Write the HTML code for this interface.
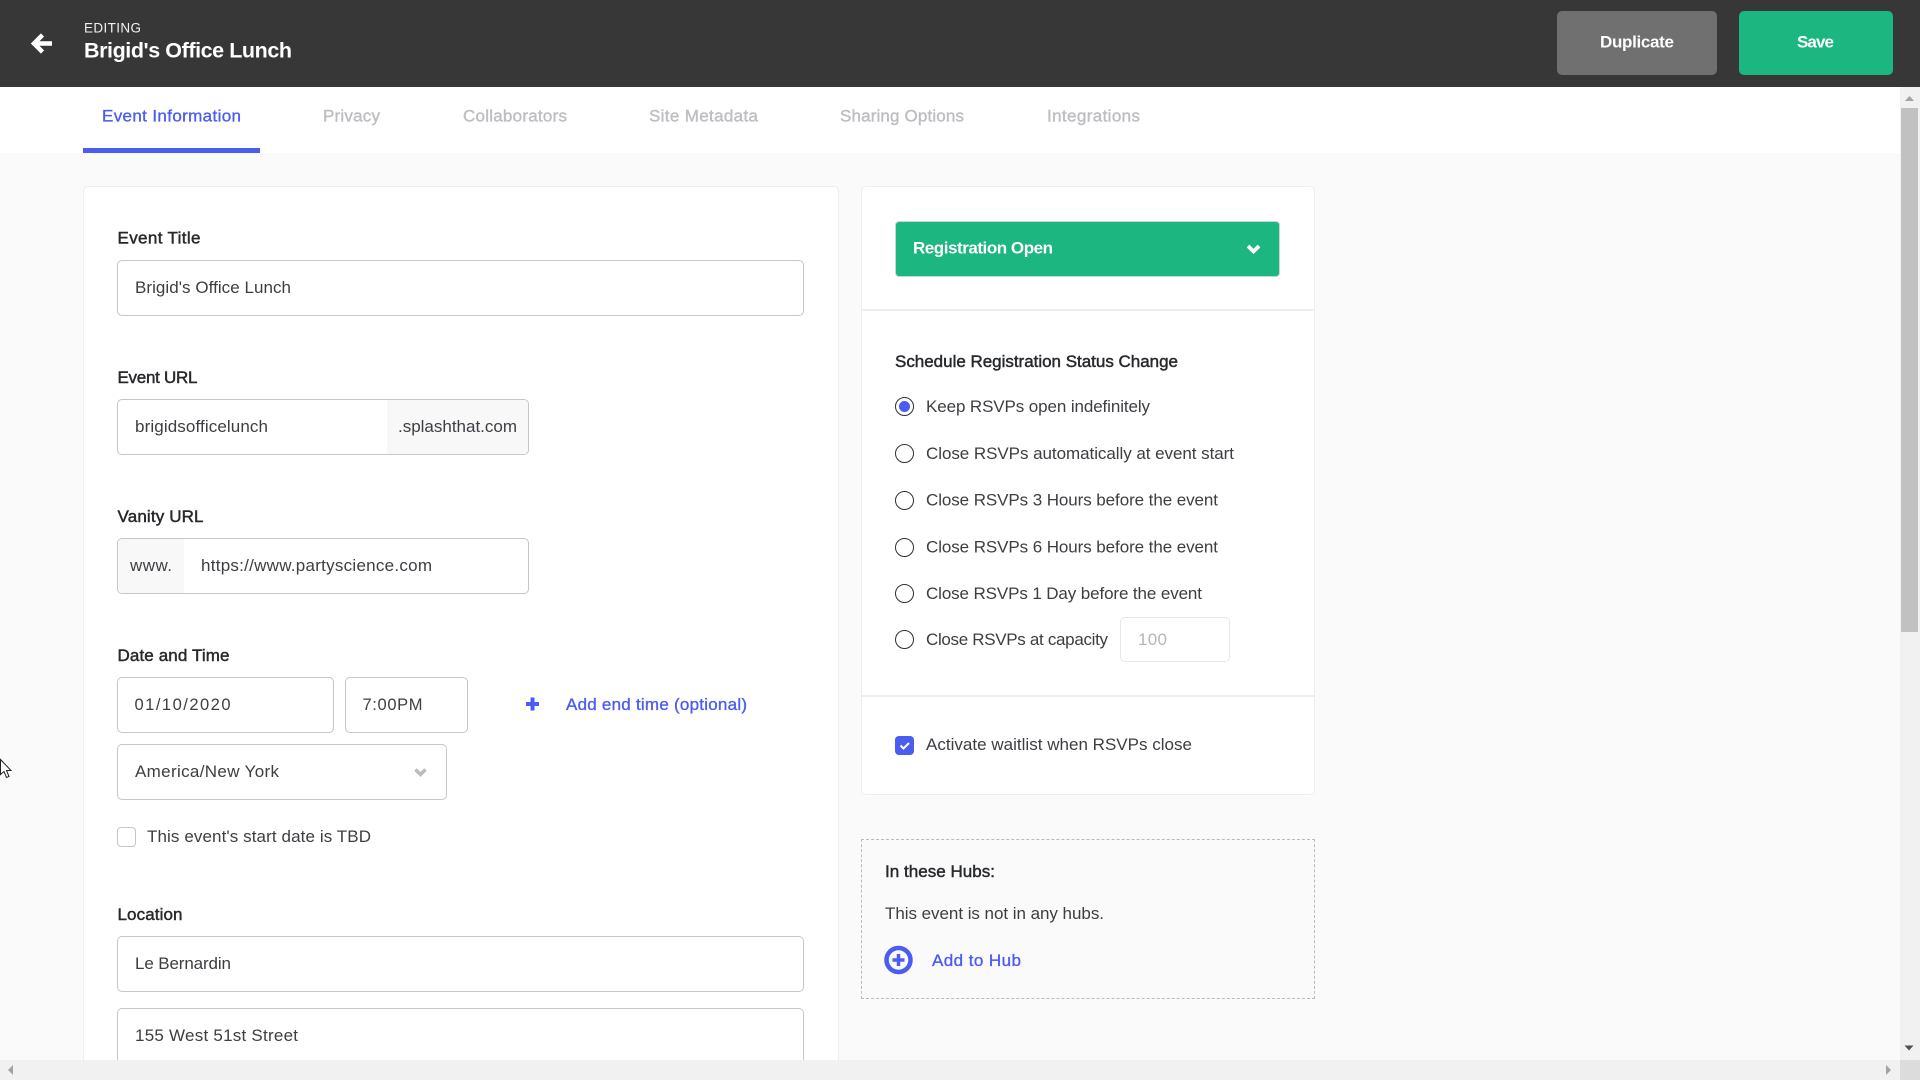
<!DOCTYPE html>
<html lang="en">
<head>
<meta charset="utf-8">
<title>Brigid's Office Lunch</title>
<style>
html,body{margin:0;padding:0;width:1920px;height:1080px;overflow:hidden;background:#fafafb}
body{position:relative;font-family:"Liberation Sans",sans-serif}
.a{position:absolute;box-sizing:border-box}
.inp{border:1px solid #c4c6ca;border-radius:5px;background:#fff}
.card{background:#fff;border:1px solid #eeeef0;border-radius:5px}
svg.t{position:absolute;left:0;top:0;z-index:5}
svg.t text{font-family:"Liberation Sans",sans-serif;font-size:17px;fill:#3c3e42}
svg.t .m{fill:#26282b;stroke:#26282b;stroke-width:.45px}
svg.t .tab{fill:#bcbec2;stroke:#bcbec2;stroke-width:.4px}
svg.t .l{fill:#4b5cf0;stroke:#4b5cf0;stroke-width:.35px}
svg.t .b{fill:#fff;font-weight:700}
.radio{width:19px;height:19px;border:1.5px solid #2e3033;border-radius:50%;background:#fff;left:895px}
</style>
</head>
<body>
<div class="a" style="left:0;top:0;width:1920px;height:87px;background:#373737"></div>
<div class="a" style="left:1557px;top:11px;width:160px;height:64px;background:#707070;border-radius:5px"></div>
<div class="a" style="left:1739px;top:11px;width:154px;height:64px;background:#1cb681;border-radius:5px"></div>

<div class="a" style="left:0;top:87px;width:1900px;height:66px;background:#fff"></div>
<div class="a" style="left:83px;top:148px;width:177px;height:5px;background:#4b5cf0"></div>

<div class="a card" style="left:83px;top:186px;width:756px;height:890px"></div>
<div class="a inp" style="left:117px;top:260px;width:687px;height:56px"></div>
<div class="a inp" style="left:117px;top:399px;width:412px;height:56px;overflow:hidden"><div class="a" style="left:269px;top:0;width:143px;height:54px;background:#f8f8f9"></div></div>
<div class="a inp" style="left:117px;top:538px;width:412px;height:56px;overflow:hidden"><div class="a" style="left:0;top:0;width:66px;height:54px;background:#f8f8f9"></div></div>
<div class="a inp" style="left:117px;top:677px;width:217px;height:56px"></div>
<div class="a inp" style="left:345px;top:677px;width:123px;height:56px"></div>
<div class="a inp" style="left:117px;top:744px;width:330px;height:56px"></div>
<div class="a inp" style="left:117px;top:827px;width:19px;height:20px;border-radius:4px"></div>
<div class="a inp" style="left:117px;top:936px;width:687px;height:56px"></div>
<div class="a inp" style="left:117px;top:1008px;width:687px;height:70px"></div>

<div class="a card" style="left:861px;top:186px;width:454px;height:609px"></div>
<div class="a" style="left:895px;top:221px;width:385px;height:56px;background:#1cb681;border:1px solid #c9d6d0;border-radius:4px"></div>
<div class="a" style="left:862px;top:309px;width:452px;height:2px;background:#eeeef0"></div>
<div class="a" style="left:862px;top:695px;width:452px;height:2px;background:#eeeef0"></div>
<div class="a radio" style="top:397px"><div class="a" style="left:2.5px;top:2.5px;width:11px;height:11px;border-radius:50%;background:#4b5cf0"></div></div>
<div class="a radio" style="top:444px"></div>
<div class="a radio" style="top:490.5px"></div>
<div class="a radio" style="top:537.5px"></div>
<div class="a radio" style="top:584px"></div>
<div class="a radio" style="top:630px"></div>
<div class="a" style="left:1120px;top:617px;width:110px;height:45px;border:1px solid #e6e7e9;border-radius:5px;background:#fff"></div>
<div class="a" style="left:895px;top:736px;width:19px;height:19px;border-radius:4px;background:#4b5cf0"></div>
<div class="a" style="left:861px;top:839px;width:454px;height:160px;border:1px dashed #b9bbbe"></div>

<svg class="t" width="1920" height="1080" viewBox="0 0 1920 1080" xmlns="http://www.w3.org/2000/svg">
  <path d="M52 43.500H34M42.500 35l-8.500 8.500 8.500 8.500" fill="none" stroke="#fff" stroke-width="4.500"/>
  <text x="84" y="32.500" textLength="57" style="font-size:13.500px;fill:#f0f0f0">EDITING</text>
  <text x="84" y="57.500" textLength="208" class="b" style="font-size:21.500px">Brigid's Office Lunch</text>
  <text x="1600" y="47.500" textLength="74" class="b" style="font-size:17px">Duplicate</text>
  <text x="1797" y="47.500" textLength="37" class="b" style="font-size:17px">Save</text>

  <text x="102" y="121.500" textLength="139" class="l">Event Information</text>
  <text x="323" y="121.500" textLength="57" class="tab">Privacy</text>
  <text x="463" y="121.500" textLength="104" class="tab">Collaborators</text>
  <text x="649" y="121.500" textLength="109" class="tab">Site Metadata</text>
  <text x="840" y="121.500" textLength="124" class="tab">Sharing Options</text>
  <text x="1047" y="121.500" textLength="93" class="tab">Integrations</text>

  <text x="117.500" y="243.500" textLength="83" class="m">Event Title</text>
  <text x="135" y="293" textLength="156">Brigid's Office Lunch</text>
  <text x="117.500" y="383" textLength="80" class="m">Event URL</text>
  <text x="135" y="432" textLength="133">brigidsofficelunch</text>
  <text x="398" y="432" textLength="119">.splashthat.com</text>
  <text x="117.500" y="522" textLength="86" class="m">Vanity URL</text>
  <text x="130" y="571" textLength="42">www.</text>
  <text x="201" y="571" textLength="231">https://www.partyscience.com</text>
  <text x="117.500" y="661" textLength="112" class="m">Date and Time</text>
  <text x="134.500" y="710" textLength="96" style="font-size:16.500px">01/10/2020</text>
  <text x="362.500" y="710" textLength="60" style="font-size:16.500px">7:00PM</text>
  <path d="M532.500 697.500v13M526 704h13" stroke="#4b5cf0" stroke-width="4" fill="none"/>
  <text x="566" y="710" textLength="181" class="l">Add end time (optional)</text>
  <text x="135" y="777" textLength="144">America/New York</text>
  <path d="M415.500 769.500l5 5 5-5" stroke="#b9bbbe" stroke-width="3.500" fill="none"/>
  <text x="147" y="842" textLength="224">This event's start date is TBD</text>
  <text x="117.500" y="920" textLength="65" class="m">Location</text>
  <text x="135" y="969" textLength="96">Le Bernardin</text>
  <text x="135" y="1041" textLength="163">155 West 51st Street</text>

  <text x="913" y="253.500" textLength="140" class="b">Registration Open</text>
  <path d="M1248 246l5.500 5.500 5.500-5.500" stroke="#fff" stroke-width="3.800" fill="none"/>
  <text x="895" y="367" textLength="283" class="m">Schedule Registration Status Change</text>
  <text x="926" y="412" textLength="224">Keep RSVPs open indefinitely</text>
  <text x="926" y="459" textLength="308">Close RSVPs automatically at event start</text>
  <text x="926" y="505.500" textLength="292">Close RSVPs 3 Hours before the event</text>
  <text x="926" y="552.500" textLength="292">Close RSVPs 6 Hours before the event</text>
  <text x="926" y="599" textLength="276">Close RSVPs 1 Day before the event</text>
  <text x="926" y="645" textLength="182">Close RSVPs at capacity</text>
  <text x="1138" y="645" textLength="29" style="fill:#b4b6b9">100</text>
  <path d="M900.500 745.500l3 3 5.500-5.500" stroke="#fff" stroke-width="2" fill="none"/>
  <text x="926" y="750" textLength="266">Activate waitlist when RSVPs close</text>
  <text x="885" y="877" textLength="110" class="m">In these Hubs:</text>
  <text x="885" y="919" textLength="219">This event is not in any hubs.</text>
  <circle cx="898.500" cy="960" r="12" fill="none" stroke="#4b5cf0" stroke-width="4.500"/>
  <path d="M898.500 954v12M892.500 960h12" stroke="#4b5cf0" stroke-width="3.500" fill="none"/>
  <text x="932" y="966" textLength="89" class="l">Add to Hub</text>

  <path d="M.5 759.500v15l3.500-3 2.500 6 2.500-1-2.500-6h4.500z" fill="#fff" stroke="#222" stroke-width="1"/>
</svg>

<div class="a" style="z-index:6;left:1900px;top:87px;width:20px;height:973px;background:#f1f1f1">
  <div class="a" style="left:1px;top:21px;width:17px;height:524px;background:#c1c1c1"></div>
  <svg class="a" style="left:0;top:0" width="20" height="973"><path d="M5 14h9l-4.500-5z" fill="#a3a3a3"/><path d="M4.500 958.500h9l-4.500 5z" fill="#505050"/></svg>
</div>
<div class="a" style="z-index:6;left:0;top:1060px;width:1900px;height:20px;background:#f1f1f1">
  <svg class="a" style="left:0;top:0" width="1900" height="20"><path d="M13 5v10l-5-5z" fill="#a3a3a3"/><path d="M1886 5v10l5-5z" fill="#a3a3a3"/></svg>
</div>
<div class="a" style="z-index:6;left:1900px;top:1060px;width:20px;height:20px;background:#dcdcdc"></div>
</body>
</html>
